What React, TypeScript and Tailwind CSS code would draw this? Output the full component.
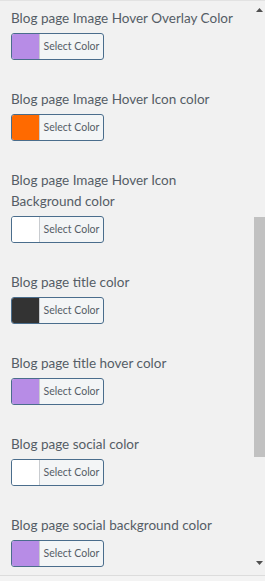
const settings = [
  { label: "Blog page Image Hover Overlay Color", color: "#b78ce6" },
  { label: "Blog page Image Hover Icon color", color: "#ff6a00" },
  { label: "Blog page Image Hover Icon Background color", color: "#ffffff" },
  { label: "Blog page title color", color: "#333333" },
  { label: "Blog page title hover color", color: "#b78ce6" },
  { label: "Blog page social color", color: "#ffffff" },
  { label: "Blog page social background color", color: "#b78ce6" },
];

function ColorPicker({ color }: { color: string }) {
  return (
    <button
      type="button"
      className="flex h-[27px] w-[93px] overflow-hidden rounded-[3px] border border-[#4a6d8c] bg-[#f3f5f6] p-0"
    >
      <span
        className="h-full w-[28px] shrink-0 border-r border-[#c9ccd0]"
        style={{ backgroundColor: color }}
      />
      <span className="flex h-full flex-1 items-center justify-center text-[10.5px] text-[#555d66]">
        Select Color
      </span>
    </button>
  );
}

export default function App() {
  return (
    <div
      className="flex h-[581px] w-[265px] flex-col bg-[#f1f1f1]"
      style={{ fontFamily: 'Lato, "Open Sans", sans-serif' }}
    >
      <div className="flex h-[575px] border-t border-[#e2e2e2]">
        <div className="flex-1 overflow-hidden pl-[11px] pt-[7px]">
          {settings.map((s) => (
            <div key={s.label} className="mb-[29px] w-[232px]">
              <div className="mb-[4px] text-[13.5px] leading-[21px] text-[#555d66]">
                {s.label}
              </div>
              <ColorPicker color={s.color} />
            </div>
          ))}
        </div>
        <div className="flex w-[15px] flex-col items-end">
          <div className="flex h-[17px] w-[11px] items-center justify-center">
            <svg width="7" height="4" viewBox="0 0 7 4">
              <path d="M3.5 0 L7 4 L0 4 Z" fill="#505050" />
            </svg>
          </div>
          <div className="mt-[199px] h-[240px] w-[11px] bg-[#c1c1c1]" />
          <div className="flex-1" />
          <div className="mb-[4px] flex h-[17px] w-[11px] items-center justify-center">
            <svg width="7" height="4" viewBox="0 0 7 4">
              <path d="M0 0 L7 0 L3.5 4 Z" fill="#505050" />
            </svg>
          </div>
        </div>
      </div>
      <div className="flex-1 border-t border-[#dcdcdc] bg-[#f3f3f3]" />
    </div>
  );
}
